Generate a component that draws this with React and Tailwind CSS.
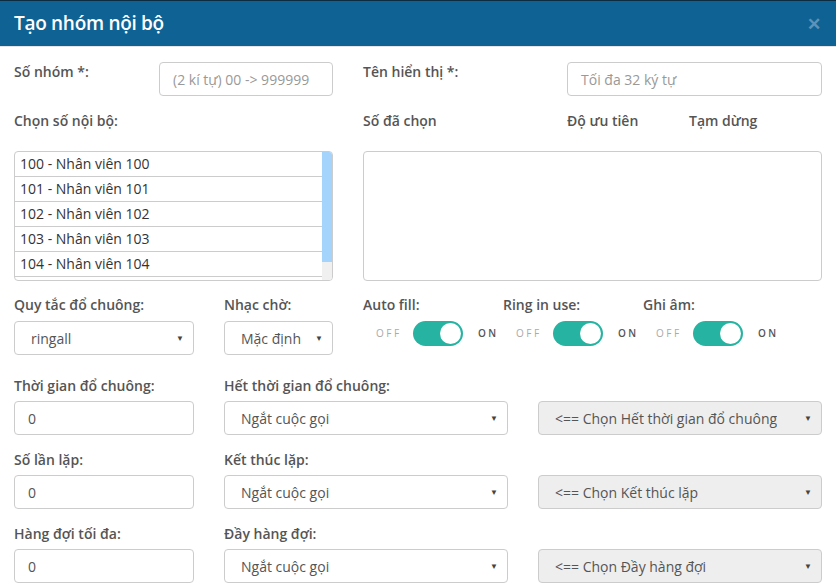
const font = { fontFamily: '"Open Sans", "Liberation Sans", sans-serif' };

const members = [
  '100 - Nhân viên 100',
  '101 - Nhân viên 101',
  '102 - Nhân viên 102',
  '103 - Nhân viên 103',
  '104 - Nhân viên 104',
];

function Label({ children, className = '' }) {
  return <div className={`text-[14px] leading-[20px] font-semibold text-[#555] ${className}`}>{children}</div>;
}

function Caret() {
  return <span className="text-[8px] text-[#444] leading-none">▼</span>;
}

function Select({ value, disabled, className = '' }) {
  return (
    <div className={`flex items-center justify-between h-[34px] border border-[#ccc] rounded ${disabled ? 'bg-[#eee]' : 'bg-white'} pl-4 pr-[9px] ${className}`}>
      <span className="text-[14px] text-[#555] truncate">{value}</span>
      <Caret />
    </div>
  );
}

function TextInput({ value, placeholder, className = '' }) {
  return (
    <div className={`flex items-center h-[34px] border border-[#ccc] rounded bg-white px-[13px] ${className}`}>
      {value ? (
        <span className="text-[14px] text-[#555]">{value}</span>
      ) : (
        <span className="text-[14px] text-[#999]">{placeholder}</span>
      )}
    </div>
  );
}

function Toggle() {
  return (
    <div className="flex items-center h-[25px] mt-[6px]">
      <span className="w-[50px] pl-[13px] text-[10px] tracking-[2.5px] text-[#aaa]">OFF</span>
      <div className="w-[50px] h-[25px] rounded-full bg-[#27b3a1] flex items-center justify-end pr-[2px]">
        <div className="w-[21px] h-[21px] rounded-full bg-white" />
      </div>
      <span className="ml-[15px] text-[10px] tracking-[2.5px] font-semibold text-[#555]">ON</span>
    </div>
  );
}

export default function App() {
  return (
    <div className="w-[836px] h-[587px] bg-white overflow-hidden" style={font}>
      {/* Header */}
      <div className="h-[47px] border-t border-[#0c2c42] border-b border-b-[#e5e5e5] bg-[#0f6394] flex items-center justify-between pl-[14px] pr-[15px]">
        <h1 className="text-[19px] font-semibold text-white tracking-[-0.3px] -mt-[1px]">Tạo nhóm nội bộ</h1>
        <span className="text-[17px] font-bold text-[#5a93bd] leading-none">✕</span>
      </div>

      <div className="px-[14px] pt-[15px]">
        {/* Row 1 */}
        <div className="flex gap-[30px]">
          <div className="flex w-[319px] items-start">
            <Label className="w-[145px]">Số nhóm *:</Label>
            <TextInput placeholder="(2 kí tự) 00 -> 999999" className="w-[174px]" />
          </div>
          <div className="flex w-[459px] items-start">
            <Label className="w-[204px]">Tên hiển thị *:</Label>
            <TextInput placeholder="Tối đa 32 ký tự" className="w-[255px]" />
          </div>
        </div>

        {/* Row 2 */}
        <div className="flex gap-[30px] mt-[15px]">
          <div className="w-[319px]">
            <Label>Chọn số nội bộ:</Label>
            <div className="mt-[20px] h-[130px] border border-[#ccc] rounded flex overflow-hidden">
              <div className="flex-1">
                {members.map((m) => (
                  <div key={m} className="h-[25px] border-b border-[#ccc] pl-[5px] flex items-center text-[14px] leading-[20px] text-[#333]">
                    {m}
                  </div>
                ))}
              </div>
              <div className="w-[10px] bg-[#f0f0f0] flex flex-col">
                <div className="h-[110px] bg-[#a4d3fb]" />
              </div>
            </div>
          </div>
          <div className="w-[459px]">
            <div className="flex">
              <Label className="w-[204px] font-normal">Số đã chọn</Label>
              <Label className="w-[122px] font-normal">Độ ưu tiên</Label>
              <Label className="font-normal">Tạm dừng</Label>
            </div>
            <div className="mt-[20px] h-[130px] border border-[#ccc] rounded" />
          </div>
        </div>

        {/* Row 3 */}
        <div className="flex mt-[14px]">
          <div className="w-[180px]">
            <Label>Quy tắc đổ chuông:</Label>
            <Select value="ringall" className="mt-[6px]" />
          </div>
          <div className="w-[109px] ml-[30px]">
            <Label>Nhạc chờ:</Label>
            <Select value="Mặc định" className="mt-[6px]" />
          </div>
          <div className="w-[140px] ml-[30px]">
            <Label>Auto fill:</Label>
            <Toggle />
          </div>
          <div className="w-[140px]">
            <Label>Ring in use:</Label>
            <Toggle />
          </div>
          <div className="w-[140px]">
            <Label>Ghi âm:</Label>
            <Toggle />
          </div>
        </div>

        {/* Rows 4-6 */}
        {[
          ['Thời gian đổ chuông:', 'Hết thời gian đổ chuông:', '<== Chọn Hết thời gian đổ chuông'],
          ['Số lần lặp:', 'Kết thúc lặp:', '<== Chọn Kết thúc lặp'],
          ['Hàng đợi tối đa:', 'Đầy hàng đợi:', '<== Chọn Đầy hàng đợi'],
        ].map(([a, b, c], i) => (
          <div key={a} className={`flex ${i === 0 ? 'mt-[21px]' : 'mt-[15px]'}`}>
            <div className="w-[180px]">
              <Label>{a}</Label>
              <TextInput value="0" className="mt-[5px]" />
            </div>
            <div className="w-[284px] ml-[30px]">
              <Label>{b}</Label>
              <Select value="Ngắt cuộc gọi" className="mt-[5px]" />
            </div>
            <div className="w-[284px] ml-[30px] pt-[25px]">
              <Select value={c} disabled />
            </div>
          </div>
        ))}
      </div>
    </div>
  );
}
